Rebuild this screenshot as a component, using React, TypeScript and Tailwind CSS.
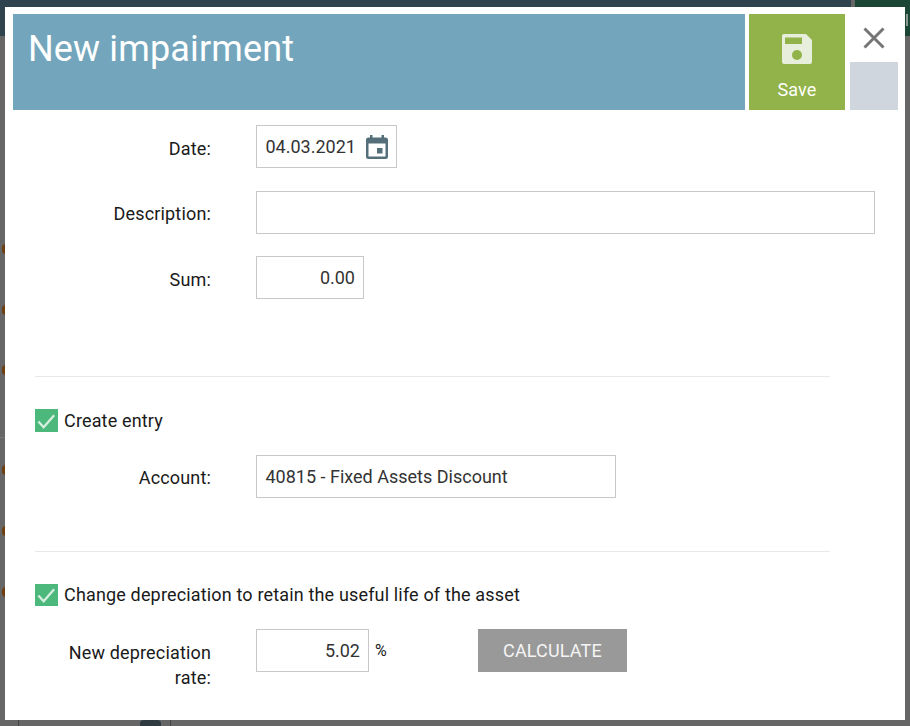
import React from "react";

function Check({ className = "h-[23px]" }: { className?: string }) {
  return (
    <span className={`flex w-[23px] shrink-0 items-center justify-center bg-[#4cb87c] ${className}`}>
      <svg viewBox="0 0 23 23" className="h-[22px] w-[23px]" fill="none">
        <path d="M3 12 L8.5 18 L19.5 5.5" stroke="#d6efe0" strokeWidth="2.4" />
      </svg>
    </span>
  );
}

function Label({ children, className = "" }: { children: React.ReactNode; className?: string }) {
  return <div className={`w-[176px] shrink-0 text-right ${className}`}>{children}</div>;
}

const inputBox = "flex h-[43px] shrink-0 items-center border border-[#c8c8c8] bg-white pl-[8.5px] pr-[8px] tracking-normal text-[#333]";

export default function App() {
  return (
    <div className="relative h-[726px] w-[910px] overflow-hidden bg-[#666666] font-['Roboto',sans-serif] text-[18px] leading-[23px] tracking-[0.16px] text-[#1a1a1a]">
      <div className="absolute left-0 top-0 h-[36px] w-[851px] bg-[#2f434e]" />
      <div className="absolute right-0 top-0 h-[36px] w-[55px] bg-[#1b4636]" />
      <div className="absolute left-[906px] top-[14px] h-[12px] w-[2px] bg-[#8a9a90]" />
      {[249, 310, 370, 470, 531, 592].map((y) => (
        <div key={y} className="absolute left-[2px] h-[10px] w-[8px] rounded-full bg-[#6e3f10]" style={{ top: y - 5 }} />
      ))}
      <div className="absolute left-0 top-[437px] h-px w-[5px] bg-[#777]" />
      <div className="absolute left-[18px] top-[720px] h-[6px] w-px bg-[#444]" />
      <div className="absolute left-[170px] top-[720px] h-[6px] w-px bg-[#444]" />
      <div className="absolute left-[140px] top-[720px] h-[6px] w-[21px] rounded-t bg-[#2f3a40]" />

      <div className="relative ml-[5px] mt-[7px] h-[713px] w-[900px] bg-white">
        <div className="flex pl-[8px] pr-[7px] pt-[7px]">
          <div className="h-[96px] w-[732px] bg-[#73a6bc] pl-[15px] pt-[10px] text-[36px] leading-[50px] tracking-[0.15px] text-white">
            New impairment
          </div>
          <div className="ml-[4px] flex h-[96px] w-[96px] flex-col items-center bg-[#91b349] pt-[20px] text-white">
            <svg viewBox="0 0 30 30" className="h-[30px] w-[30px]">
              <path
                d="M2 0 H24 L30 6 V28 a2 2 0 0 1 -2 2 H2 a2 2 0 0 1 -2 -2 V2 a2 2 0 0 1 2 -2 Z"
                fill="#e8eedc"
              />
              <rect x="3" y="3.5" width="17" height="6.5" fill="#91b349" />
              <circle cx="15" cy="21" r="5" fill="#91b349" />
            </svg>
            <div className="mt-[16px] leading-[20px]">Save</div>
          </div>
          <div className="ml-[5px] flex w-[48px] flex-col">
            <div className="flex h-[48px] items-center justify-center pr-px">
              <svg viewBox="0 0 22 22" className="h-[22px] w-[22px]" fill="none">
                <path d="M1.5 1.5 L20.5 20.5 M20.5 1.5 L1.5 20.5" stroke="#757575" strokeWidth="3" />
              </svg>
            </div>
            <div className="h-[48px] bg-[#cfd6de]" />
          </div>
        </div>

        <div className="pl-[30px] pt-[15px]">
          <div className="flex items-center">
            <Label className="pt-[4px]">Date:</Label>
            <div className={`ml-[45px] w-[141px] justify-between ${inputBox}`}>
              <span>04.03.2021</span>
              <svg viewBox="0 0 22 24" className="h-[24px] w-[22px]">
                <path
                  d="M4 0 H6.5 V2.5 H15.5 V0 H18 V2.5 H19.5 A2.5 2.5 0 0 1 22 5 V21.5 A2.5 2.5 0 0 1 19.5 24 H2.5 A2.5 2.5 0 0 1 0 21.5 V5 A2.5 2.5 0 0 1 2.5 2.5 H4 Z"
                  fill="#546e7a"
                />
                <rect x="2.5" y="8.5" width="17" height="13" fill="#fff" />
                <rect x="11" y="13" width="5.5" height="5.5" fill="#546e7a" />
              </svg>
            </div>
          </div>
          <div className="mt-[23px] flex items-center">
            <Label className="pt-[2px]">Description:</Label>
            <div className={`ml-[45px] w-[619px] ${inputBox}`} />
          </div>
          <div className="mt-[22px] flex items-center">
            <Label className="pt-[4px]">Sum:</Label>
            <div className={`ml-[45px] w-[108px] justify-end ${inputBox}`}>0.00</div>
          </div>

          <div className="mt-[77px] h-px w-[795px] bg-[#e8e8e8]" />

          <div className="mt-[32px] flex items-center gap-[6px]">
            <Check />
            <span>Create entry</span>
          </div>
          <div className="mt-[23px] flex items-center">
            <Label className="pt-[2px]">Account:</Label>
            <div className={`ml-[45px] w-[360px] ${inputBox}`}>40815 - Fixed Assets Discount</div>
          </div>

          <div className="mt-[53px] h-px w-[795px] bg-[#e8e8e8]" />

          <div className="mt-[32px] flex items-center gap-[6px]">
            <Check className="h-[22px]" />
            <span className="leading-[22px]">Change depreciation to retain the useful life of the asset</span>
          </div>
          <div className="mt-[23px] flex items-start">
            <Label className="pl-[20px] pt-[11px] leading-[25px]">New depreciation rate:</Label>
            <div className={`ml-[45px] w-[113px] justify-end ${inputBox}`}>5.02</div>
            <div className="ml-[6px] mt-[12px] w-[103px] text-[16px] leading-[20px]">%</div>
            <div className="flex h-[43px] w-[149px] items-center justify-center bg-[#999999] text-[#f5f5f5]">
              CALCULATE
            </div>
          </div>
        </div>
      </div>
    </div>
  );
}
